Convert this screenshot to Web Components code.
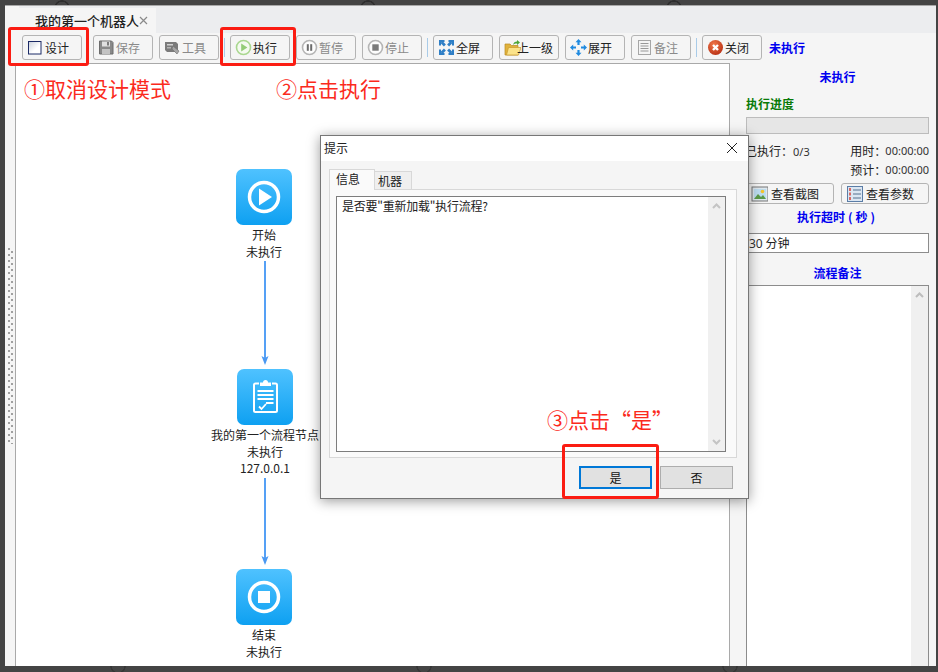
<!DOCTYPE html>
<html lang="zh">
<head>
<meta charset="utf-8">
<title>我的第一个机器人</title>
<style>
  html, body { margin: 0; padding: 0; }
  body { font: 12px/17px "Noto Sans CJK SC", "Noto Sans", sans-serif; color: #222; overflow: hidden; }
</style>
</head>
<body>
<robot-app>
  <tab-strip slot="tabs">我的第一个机器人</tab-strip>
  <robot-toolbar slot="toolbar">
    <tool-btn icon="design" style="margin-right:5px">设计</tool-btn>
    <tool-btn icon="save" off>保存</tool-btn>
    <tool-btn icon="tools" off>工具</tool-btn>
    <tool-sep></tool-sep>
    <tool-btn icon="play">执行</tool-btn>
    <tool-btn icon="pause" off>暂停</tool-btn>
    <tool-btn icon="stop" off>停止</tool-btn>
    <tool-sep></tool-sep>
    <tool-btn icon="full">全屏</tool-btn>
    <tool-btn icon="folder" tight>上一级</tool-btn>
    <tool-btn icon="expand">展开</tool-btn>
    <tool-btn icon="note" off>备注</tool-btn>
    <tool-sep></tool-sep>
    <tool-btn icon="close">关闭</tool-btn>
    <span slot="status">未执行</span>
  </robot-toolbar>
  <flow-canvas slot="canvas">
    <flow-arrow style="left:244px;top:197px" len="104"></flow-arrow>
    <flow-arrow style="left:244px;top:414px" len="87"></flow-arrow>
    <flow-node kind="start" style="left:220px;top:105px">开始<br>未执行</flow-node>
    <flow-node kind="task" style="left:221px;top:305px">我的第一个流程节点<br>未执行<br>127.0.0.1</flow-node>
    <flow-node kind="end" style="left:220px;top:505px">结束<br>未执行</flow-node>
  </flow-canvas>
  <side-panel slot="side"></side-panel>
  <prompt-dialog slot="overlay" title="提示"></prompt-dialog>
  <red-box slot="overlay" style="left:8px;top:27px;width:81px;height:39px"></red-box>
  <red-box slot="overlay" style="left:220px;top:27px;width:76px;height:39px"></red-box>
  <red-box slot="overlay" style="left:562px;top:444px;width:97px;height:55px"></red-box>
  <red-note slot="overlay" style="left:24px;top:73px">①取消设计模式</red-note>
  <red-note slot="overlay" style="left:276px;top:73px">②点击执行</red-note>
  <red-note slot="overlay" style="left:547px;top:404px">③点击“是”</red-note>
</robot-app>

<script>
const ICONS = {
  design: `<rect x="1.500" y="2.500" width="12.500" height="12.500" fill="url(#dg)" stroke="#1b2a66"/><defs><linearGradient id="dg" x1="0" y1="0" x2="1" y2="1"><stop offset="0" stop-color="#c9cfdb"/><stop offset=".6" stop-color="#fff"/></linearGradient></defs>`,
  save: `<path d="M1.500 2h12l1.500 1.500V15H1.500z" fill="#777" stroke="#555"/><rect x="4" y="2.500" width="8" height="5" fill="#ddd"/><rect x="4" y="10" width="8" height="5" fill="#bbb"/><rect x="9" y="3" width="2" height="3.500" fill="#666"/>`,
  tools: `<path d="M1 3h11l2 2v8H3l-2-2z" fill="#666"/><rect x="3" y="5" width="6" height="1.500" fill="#ccc"/><rect x="3" y="8" width="4" height="1.500" fill="#aaa"/><path d="M9 7l6 5-2 3-5-5z" fill="#999" stroke="#555" stroke-width=".6"/>`,
  play: `<circle cx="8.500" cy="8.500" r="7" fill="#f4faf0" stroke="#a9d78f" stroke-width="1.600"/><path d="M6.200 4.600l6.200 3.900-6.200 3.900z" fill="#93cc77"/>`,
  pause: `<circle cx="8.500" cy="8.500" r="7" fill="#fff" stroke="#aaa" stroke-width="1.600"/><rect x="5.800" y="5.200" width="2" height="6.600" fill="#555"/><rect x="9.200" y="5.200" width="2" height="6.600" fill="#555"/>`,
  stop: `<circle cx="8.500" cy="8.500" r="7" fill="#fff" stroke="#aaa" stroke-width="1.600"/><rect x="5.300" y="5.300" width="6.400" height="6.400" fill="#666"/>`,
  full: `<g fill="#2f7fc6"><rect x="1" y="1" width="5.500" height="2"/><rect x="1" y="1" width="2" height="5.500"/><path d="M2.500 4l2-2 3.400 3.400-2 2z"/><rect x="10.500" y="1" width="5.500" height="2"/><rect x="14" y="1" width="2" height="5.500"/><path d="M14.500 4l-2-2-3.400 3.400 2 2z"/><rect x="1" y="14" width="5.500" height="2"/><rect x="1" y="10.500" width="2" height="5.500"/><path d="M2.500 13l2 2 3.400-3.400-2-2z"/><rect x="10.500" y="14" width="5.500" height="2"/><rect x="14" y="10.500" width="2" height="5.500"/><path d="M14.500 13l-2 2-3.400-3.400 2-2z"/></g>`,
  folder: `<path d="M1 5h5l1.500 1.500H14V16H1z" fill="#e0b23c" stroke="#b98a20" stroke-width=".7"/><path d="M2.500 16L4.500 8.500H17L14.500 16z" fill="#fbe38a" stroke="#c99a2c" stroke-width=".7"/><path d="M9 6c.5-2.500 2-3.500 4-3.500V1l3 2.500L13 6V4.500c-1.500 0-3 .4-4 1.500z" fill="#4da63a"/>`,
  expand: `<g fill="#1f8ae0"><path d="M8.500 0l3 3.200H9.600V6H7.400V3.200H5.500z"/><path d="M8.500 17l3-3.200H9.600V11H7.400v2.800H5.500z"/><path d="M0 8.500l3.200-3v1.900H6v2.200H3.200v1.900z"/><path d="M17 8.500l-3.200-3v1.900H11v2.200h2.800v1.900z"/></g>`,
  note: `<rect x="2.500" y="1.500" width="12" height="14" fill="#f4f4f4" stroke="#999"/><path d="M4.500 4.500h8M4.500 7h8M4.500 9.500h8M4.500 12h8" stroke="#888"/>`,
  close: `<defs><radialGradient id="cg" cx=".4" cy=".3" r=".8"><stop offset="0" stop-color="#f0784a"/><stop offset="1" stop-color="#b52a10"/></radialGradient></defs><circle cx="8.500" cy="8.500" r="7.500" fill="url(#cg)"/><path d="M6 6l5 5M11 6l-5 5" stroke="#fff" stroke-width="2.400"/>`,
  pic: `<rect x="1" y="2" width="16" height="14" fill="#dfe8ee" stroke="#777"/><rect x="3" y="4" width="12" height="10" fill="#bcdcf0"/><circle cx="11.500" cy="6.500" r="1.800" fill="#f5c52c"/><path d="M3 14l4-5 3 3 2-2 3 4z" fill="#5a9a48"/>`,
  params: `<rect x="1.500" y="1.500" width="15" height="15" fill="#dbe6f2" stroke="#5b7da6"/><path d="M7 5h8M7 9h8M7 13h8" stroke="#55708f"/><path d="M4 3v3M4 7.500v3M4 12v3" stroke="#d8352a" stroke-width="1.400"/>`
};

function svgIcon(name, size = 17) {
  return `<svg width="${size}" height="${size}" viewBox="0 0 17 17" aria-hidden="true">${ICONS[name]}</svg>`;
}

const NODE_ICONS = {
  start: `<circle cx="28" cy="28" r="14.500" fill="none" stroke="#fff" stroke-width="3.500"/><path d="M23 19.500L36 28l-13 8.500z" fill="#fff"/>`,
  end: `<circle cx="28" cy="28" r="14.500" fill="none" stroke="#fff" stroke-width="3.500"/><rect x="22" y="22" width="12" height="12" fill="#fff"/>`,
  task: `<path d="M22 14.500h-3.500a1.500 1.500 0 0 0-1.500 1.500v25.500a1.500 1.500 0 0 0 1.500 1.500h20a1.500 1.500 0 0 0 1.500-1.500V16a1.500 1.500 0 0 0-1.500-1.500H35" fill="none" stroke="#fff" stroke-width="2"/><path d="M23 17v-3.500h3a2.500 2.500 0 0 1 5 0h3V17z" fill="#fff"/><path d="M20.500 22h16M20.500 26h16M20.500 30h16M29 34h7.500" stroke="#fff" stroke-width="1.800"/><path d="M22 37.500l2.500 2.500 4.500-5" fill="none" stroke="#fff" stroke-width="1.800"/>`
};

class RobotApp extends HTMLElement {
  constructor() {
    super();
    this.attachShadow({ mode: 'open' }).innerHTML = `
      <style>
        :host {
          display: block; position: relative; box-sizing: border-box;
          width: 938px; height: 672px; padding: 5px 2px 6px 5px; overflow: hidden;
          background-color: #444;
          background-image:
            radial-gradient(circle 8px at 62px 8px, transparent 6px, #2e2e2e 6.500px, #2e2e2e 7.500px, transparent 8px),
            radial-gradient(circle 8px at 118px 0, transparent 6px, #363636 6.500px, #363636 7.500px, transparent 8px);
          background-size: 306px 8px, 306px 6px;
          background-position: 0 0, 0 100%;
          background-repeat: repeat-x;
        }
        .win { display: flex; flex-direction: column; height: 100%; background: #f5f5f5; border-top: 1px solid #a8a8a8; box-sizing: border-box; }
        .main { display: flex; flex: 1; min-height: 0; }
        .rail { width: 10px; flex: none; }
        .dots {
          width: 5px; height: 196px; margin: 185px 0 0 3px;
          background:
            linear-gradient(#a0a0a0 2px, transparent 2px) 0 0 / 2px 6px repeat-y,
            linear-gradient(#a0a0a0 2px, transparent 2px) 3px 3px / 2px 6px repeat-y;
        }
        ::slotted([slot="overlay"]) { position: absolute; }
      </style>
      <div class="win">
        <slot name="tabs"></slot>
        <slot name="toolbar"></slot>
        <div class="main">
          <div class="rail"><div class="dots"></div></div>
          <slot name="canvas"></slot>
          <slot name="side"></slot>
        </div>
      </div>
      <slot name="overlay"></slot>`;
  }
}

class TabStrip extends HTMLElement {
  constructor() {
    super();
    this.attachShadow({ mode: 'open' }).innerHTML = `
      <style>
        :host { display: flex; align-items: flex-end; height: 27px; padding-left: 14px; background: linear-gradient(90deg, #f5f5f5 14px, #ecedef 14px); }
        .tab { display: flex; align-items: center; width: 137px; height: 25px; box-sizing: border-box; padding-left: 16px; background: #f5f5f5; font-size: 13px; font-weight: 500; color: #222; white-space: nowrap; }
        svg { display: block; flex: none; margin: 0 0 0 0; }
      </style>
      <div class="tab"><slot></slot><svg width="9" height="9" viewBox="0 0 9 9"><path d="M1 1l7 7M8 1L1 8" stroke="#8a8a8a" stroke-width="1.200"/></svg></div>`;
  }
}

class RobotToolbar extends HTMLElement {
  constructor() {
    super();
    this.attachShadow({ mode: 'open' }).innerHTML = `
      <style>
        :host { display: flex; gap: 6px; height: 30px; box-sizing: border-box; padding: 2px 0 0 17px; flex: none; }
        .status { display: block; margin-left: 1px; line-height: 25px; }
        ::slotted([slot="status"]) { color: #0000f0; font-weight: 700; }
      </style>
      <slot></slot><div class="status"><slot name="status"></slot></div>`;
  }
}

class ToolBtn extends HTMLElement {
  constructor() {
    super();
    this.attachShadow({ mode: 'open' });
  }
  connectedCallback() {
    const tight = this.hasAttribute('tight');
    this.shadowRoot.innerHTML = `
      <style>
        :host { display: flex; align-items: center; flex: none; width: var(--btn-w, 60px); height: var(--btn-h, 25px); box-sizing: border-box; padding-left: 4px; border: 1px solid #b4b4b4; border-radius: 3px; background: #f5f5f5; color: #222; white-space: nowrap; }
        :host([off]) { color: #8a8a8a; }
        :host([off]) svg { opacity: .85; }
        svg { flex: none; display: block; }
        .t { margin-left: ${tight ? '-4px' : 'var(--btn-gap, 1px)'}; }
      </style>
      ${svgIcon(this.getAttribute('icon'))}<span class="t"><slot></slot></span>`;
  }
}

class ToolSep extends HTMLElement {
  constructor() {
    super();
    this.attachShadow({ mode: 'open' }).innerHTML = `
      <style>:host { display: block; flex: none; width: 1px; height: 19px; margin: 3px -1px 0; background: #a9cbe8; }</style>`;
  }
}

class FlowCanvas extends HTMLElement {
  constructor() {
    super();
    this.attachShadow({ mode: 'open' }).innerHTML = `
      <style>
        :host { display: block; position: relative; flex: none; width: 715px; box-sizing: border-box; background: #fff; border: 1px solid #a9a9a9; border-bottom: 0; overflow: hidden; }
      </style>
      <slot></slot>`;
  }
}

class FlowNode extends HTMLElement {
  constructor() {
    super();
    this.attachShadow({ mode: 'open' });
  }
  connectedCallback() {
    this.shadowRoot.innerHTML = `
      <style>
        :host { position: absolute; display: block; width: 56px; }
        .box { width: 56px; height: 56px; border-radius: 7px; background: linear-gradient(#4fc2ff, #0ea0f1); }
        svg { display: block; }
        .label { position: absolute; top: 58px; left: 50%; transform: translateX(-50%); text-align: center; white-space: nowrap; line-height: 16.500px; color: #222; }
      </style>
      <div class="box"><svg width="56" height="56" viewBox="0 0 56 56">${NODE_ICONS[this.getAttribute('kind')]}</svg></div>
      <div class="label"><slot></slot></div>`;
  }
}

class FlowArrow extends HTMLElement {
  constructor() {
    super();
    this.attachShadow({ mode: 'open' });
  }
  connectedCallback() {
    const len = Number(this.getAttribute('len'));
    this.shadowRoot.innerHTML = `
      <style>:host { position: absolute; display: block; width: 10px; height: ${len}px; } svg { display: block; }</style>
      <svg width="10" height="${len}" viewBox="0 0 10 ${len}">
        <path d="M5 0V${len - 6}" stroke="#55a0f5" stroke-width="2"/>
        <path d="M1.500 ${len - 9}L5 ${len}L8.500 ${len - 9}L5 ${len - 7}z" fill="#4a98f2"/>
      </svg>`;
  }
}

class SidePanel extends HTMLElement {
  constructor() {
    super();
    this.attachShadow({ mode: 'open' }).innerHTML = `
      <style>
        :host { display: flex; flex-direction: column; flex: 1; min-width: 0; box-sizing: border-box; padding: 5px 7px 0 16px; --btn-w: 88px; --btn-h: 21px; --btn-gap: 3px; }
        .h { height: 18px; line-height: 18px; font-weight: 700; color: #0000f0; text-align: center; }
        .g { color: #087a08; text-align: left; margin-top: 9px; }
        .bar { height: 17px; box-sizing: border-box; margin-top: 4px; background: #e6e6e6; border: 1px solid #bcbcbc; }
        .stats { display: grid; grid-template-columns: 1fr auto; grid-auto-rows: 19px; margin: 7px 0 4px -1px; line-height: 19px; }
        .num { font: 11px/19px "Noto Sans", sans-serif; color: #333; }
        .r { justify-self: end; display: flex; }
        .r .num { margin-left: -1px; }
        .btns { display: flex; justify-content: space-between; height: 21px; }
        .input { height: 20px; box-sizing: border-box; margin-top: 7px; padding-left: 2px; line-height: 18px; background: #fff; border: 1px solid #8c8c8c; }
        .input .num { font-size: 12px; line-height: 18px; }
        .memo { flex: 1; margin-top: 3px; background: #fff; border: 1px solid #8c8c8c; border-bottom: 0; position: relative; display: flex; justify-content: flex-end; }
        .track { width: 17px; background: #f0f0f0; }
        .track svg { display: block; margin: 6px auto 0; }
        .p { margin: 0 3px; }
      </style>
      <div class="h">未执行</div>
      <div class="h g">执行进度</div>
      <div class="bar"></div>
      <div class="stats">
        <div>已执行&#xFF1A;<span class="num">0/3</span></div>
        <div class="r">用时&#xFF1A;<span class="num">00:00:00</span></div>
        <div></div>
        <div class="r">预计&#xFF1A;<span class="num">00:00:00</span></div>
      </div>
      <div class="btns">
        <tool-btn icon="pic">查看截图</tool-btn>
        <tool-btn icon="params">查看参数</tool-btn>
      </div>
      <div class="h" style="margin-top:4px">执行超时<span class="p">(</span>秒<span class="p">)</span></div>
      <div class="input"><span class="num">30</span> 分钟</div>
      <div class="h" style="margin-top:11px">流程备注</div>
      <div class="memo"><div class="track"><svg width="9" height="6" viewBox="0 0 9 6"><path d="M1 5l3.500-3.500L8 5" fill="none" stroke="#bdbdbd" stroke-width="2"/></svg></div></div>`;
  }
}

class PromptDialog extends HTMLElement {
  constructor() {
    super();
    this.attachShadow({ mode: 'open' });
  }
  connectedCallback() {
    this.shadowRoot.innerHTML = `
      <style>
        :host { display: flex; flex-direction: column; left: 320px; top: 135px; width: 429px; height: 364px; box-sizing: border-box; background: #f5f5f5; border: 1px solid #777; box-shadow: 0 2px 12px rgba(0,0,0,.4); color: #222; }
        .title { display: flex; align-items: center; justify-content: space-between; flex: none; height: 25px; box-sizing: border-box; padding: 0 10px 2px 3px; background: #fff; }
        .body { display: flex; flex-direction: column; flex: 1; padding: 8px 11px 0 8px; min-height: 0; }
        .tabs { display: flex; align-items: flex-end; height: 20px; flex: none; }
        .tab { box-sizing: border-box; border: 1px solid #d8d8d8; border-bottom: 0; }
        .on { width: 46px; height: 21px; line-height: 17px; padding-left: 6px; background: #fafafa; position: relative; z-index: 1; margin-bottom: -1px; }
        .off { width: 38px; height: 18px; line-height: 17px; padding-left: 3px; background: #efefef; margin-left: -1px; }
        .panel { flex: none; height: 269px; box-sizing: border-box; padding: 6px 10px 5px 6px; background: #fafafa; border: 1px solid #d8d8d8; }
        .area { display: flex; height: 100%; box-sizing: border-box; background: #fff; border: 1px solid #7d7d7d; }
        .msg { flex: 1; padding: 0 5px; line-height: 18px; letter-spacing: -.25px; }
        .track { display: flex; flex-direction: column; justify-content: space-between; width: 17px; padding: 6px 0; box-sizing: border-box; background: #f0f0f0; }
        .track svg { display: block; margin: 0 auto; }
        .foot { display: flex; justify-content: flex-end; gap: 8px; padding: 8px 4px 0 0; }
        button { width: 73px; height: 23px; padding: 0; box-sizing: border-box; font: inherit; color: #111; background: #e1e1e1; border: 1px solid #adadad; }
        button.def { border: 2px solid #0078d7; }
      </style>
      <div class="title"><span>${this.getAttribute('title')}</span>
        <svg width="12" height="12" viewBox="0 0 12 12"><path d="M1 1l10 10M11 1L1 11" stroke="#222"/></svg></div>
      <div class="body">
        <div class="tabs"><div class="tab on">信息</div><div class="tab off">机器</div></div>
        <div class="panel"><div class="area">
          <div class="msg">是否要"重新加载"执行流程?</div>
          <div class="track">
            <svg width="9" height="6" viewBox="0 0 9 6"><path d="M1 5l3.500-3.500L8 5" fill="none" stroke="#c4c4c4" stroke-width="2"/></svg>
            <svg width="9" height="6" viewBox="0 0 9 6"><path d="M1 1l3.500 3.500L8 1" fill="none" stroke="#c4c4c4" stroke-width="2"/></svg>
          </div>
        </div></div>
        <div class="foot"><button class="def">是</button><button>否</button></div>
      </div>`;
  }
}

class RedBox extends HTMLElement {
  constructor() {
    super();
    this.attachShadow({ mode: 'open' }).innerHTML = `
      <style>:host { display: block; box-sizing: border-box; border: 3px solid #fb1c12; border-radius: 3px; pointer-events: none; }</style>`;
  }
}

class RedNote extends HTMLElement {
  constructor() {
    super();
    this.attachShadow({ mode: 'open' }).innerHTML = `
      <style>:host { display: block; color: #fb2a1c; font-size: 21px; line-height: 30px; font-weight: 400; white-space: nowrap; }</style>
      <slot></slot>`;
  }
}

customElements.define('tool-btn', ToolBtn);
customElements.define('tool-sep', ToolSep);
customElements.define('tab-strip', TabStrip);
customElements.define('robot-toolbar', RobotToolbar);
customElements.define('flow-node', FlowNode);
customElements.define('flow-arrow', FlowArrow);
customElements.define('flow-canvas', FlowCanvas);
customElements.define('side-panel', SidePanel);
customElements.define('prompt-dialog', PromptDialog);
customElements.define('red-box', RedBox);
customElements.define('red-note', RedNote);
customElements.define('robot-app', RobotApp);
</script>
</body>
</html>
